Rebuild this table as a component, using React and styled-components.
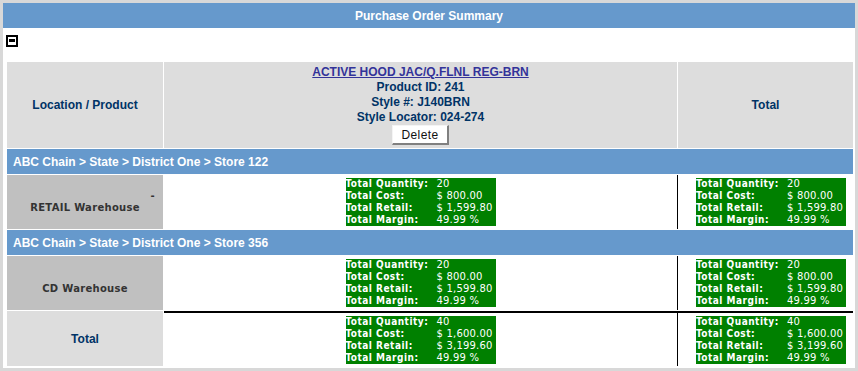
import React from 'react';
import styled, { createGlobalStyle } from 'styled-components';

const GlobalStyle = createGlobalStyle`
  html, body {
    margin: 0;
    padding: 0;
    background: #d8d8d8;
  }
  body {
    font-family: "Liberation Sans", Arial, sans-serif;
  }
`;

const locations = [
  {
    path: 'ABC Chain > State > District One > Store 122',
    name: 'RETAIL Warehouse',
    dash: true,
    stats: { qty: '20', cost: '$ 800.00', retail: '$ 1,599.80', margin: '49.99 %' },
  },
  {
    path: 'ABC Chain > State > District One > Store 356',
    name: 'CD Warehouse',
    dash: false,
    stats: { qty: '20', cost: '$ 800.00', retail: '$ 1,599.80', margin: '49.99 %' },
  },
];

const totals = { qty: '40', cost: '$ 1,600.00', retail: '$ 3,199.60', margin: '49.99 %' };

function MinusIcon() {
  return (
    <svg width="12" height="12" viewBox="0 0 12 12">
      <rect x="1" y="1" width="10" height="10" fill="#fff" stroke="#000" strokeWidth="2" />
      <rect x="3" y="4" width="6" height="3" fill="#000" />
    </svg>
  );
}

function StatsBox({ stats }) {
  return (
    <Stats>
      <dt>Total Quantity:</dt>
      <dd>{stats.qty}</dd>
      <dt>Total Cost:</dt>
      <dd>{stats.cost}</dd>
      <dt>Total Retail:</dt>
      <dd>{stats.retail}</dd>
      <dt>Total Margin:</dt>
      <dd>{stats.margin}</dd>
    </Stats>
  );
}

function DataRow({ name, label, dash, stats, sum, isTotal }) {
  return (
    <>
      {isTotal ? (
        <TotalLabel>{label}</TotalLabel>
      ) : (
        <LocationCell>
          <Dash>{dash ? '-' : '\u00a0'}</Dash>
          <span>{name}</span>
        </LocationCell>
      )}
      <DataSpan $ruled={isTotal}>
        <ProductPart>
          <StatsBox stats={stats} />
        </ProductPart>
        <Divider />
        <TotalPart>
          <StatsBox stats={sum} />
        </TotalPart>
      </DataSpan>
    </>
  );
}

export default function App() {
  return (
    <>
      <GlobalStyle />
      <Panel>
        <TitleBar>Purchase Order Summary</TitleBar>
        <ToggleRow>
          <MinusIcon />
        </ToggleRow>
        <Grid>
          <HeadCell>Location / Product</HeadCell>
          <ProductHead>
            <ProductLink href="#">ACTIVE HOOD JAC/Q.FLNL REG-BRN</ProductLink>
            <div>Product ID: 241</div>
            <div>Style #: J140BRN</div>
            <div>Style Locator: 024-274</div>
            <DeleteButton type="button">Delete</DeleteButton>
          </ProductHead>
          <HeadCell>Total</HeadCell>

          {locations.map((loc) => (
            <React.Fragment key={loc.path}>
              <SectionRow>{loc.path}</SectionRow>
              <DataRow name={loc.name} dash={loc.dash} stats={loc.stats} sum={loc.stats} />
            </React.Fragment>
          ))}

          <DataRow isTotal label="Total" stats={totals} sum={totals} />
        </Grid>
      </Panel>
    </>
  );
}

const Panel = styled.div`
  width: 852px;
  height: 365px;
  margin: 3px;
  background: #ffffff;
  display: flex;
  flex-direction: column;
`;

const TitleBar = styled.div`
  height: 25px;
  background: #6699cc;
  color: #ffffff;
  font-weight: bold;
  font-size: 12px;
  display: flex;
  align-items: center;
  justify-content: center;
`;

const ToggleRow = styled.div`
  height: 34px;
  box-sizing: border-box;
  padding: 7px 0 0 3px;
  svg {
    display: block;
  }
`;

const Grid = styled.div`
  margin: 0 2px 2px 4px;
  display: grid;
  grid-template-columns: 156px 513px 175px;
  grid-template-rows: 86px 25px 54px 25px 54px 55px;
  gap: 1px;
  background: #ffffff;
`;

const HeadCell = styled.div`
  background: #dddddd;
  color: #003366;
  font-weight: bold;
  font-size: 12px;
  display: flex;
  align-items: center;
  justify-content: center;
`;

const ProductHead = styled(HeadCell)`
  flex-direction: column;
  line-height: 15px;
`;

const ProductLink = styled.a`
  color: #333399;
  text-decoration: underline;
`;

const DeleteButton = styled.button`
  width: 57px;
  height: 20px;
  padding: 0;
  background: #ffffff;
  color: #111111;
  font-family: "Liberation Sans", Arial, sans-serif;
  font-size: 12px;
  letter-spacing: 0.4px;
  border-style: solid;
  border-width: 1px 2px 2px 1px;
  border-color: #f4f4f4 #808080 #808080 #f4f4f4;
  box-sizing: border-box;
`;

const SectionRow = styled.div`
  grid-column: 1 / 4;
  background: #6699cc;
  color: #ffffff;
  font-weight: bold;
  font-size: 12px;
  display: flex;
  align-items: center;
  padding-left: 6px;
`;

const LocationCell = styled.div`
  background: #c0c0c0;
  color: #333333;
  font-family: "DejaVu Sans", Verdana, sans-serif;
  font-weight: bold;
  font-size: 10px;
  line-height: 12px;
  letter-spacing: 0.3px;
  display: flex;
  flex-direction: column;
  justify-content: center;
  align-items: center;
`;

const Dash = styled.span`
  align-self: flex-end;
  padding-right: 8px;
`;

const TotalLabel = styled.div`
  background: #dddddd;
  color: #003366;
  font-weight: bold;
  font-size: 12px;
  display: flex;
  align-items: center;
  justify-content: center;
`;

const DataSpan = styled.div`
  grid-column: 2 / 4;
  display: flex;
  background: #ffffff;
  border-top: ${(p) => (p.$ruled ? '2px solid #000' : 'none')};
`;

const ProductPart = styled.div`
  width: 513px;
  display: flex;
  align-items: center;
  justify-content: center;
`;

const Divider = styled.div`
  width: 1px;
  background: #000000;
`;

const TotalPart = styled.div`
  flex: 1;
  display: flex;
  align-items: center;
  padding-left: 18px;
`;

const Stats = styled.dl`
  margin: 0;
  width: 150px;
  background: #008000;
  color: #ffffff;
  font-family: "DejaVu Sans", Verdana, sans-serif;
  font-size: 10px;
  line-height: 12px;
  display: grid;
  grid-template-columns: 91px 1fr;
  dt {
    font-family: "DejaVu Sans Condensed", "DejaVu Sans", sans-serif;
    font-stretch: condensed;
    font-weight: bold;
    letter-spacing: 0.5px;
  }
  dd {
    margin: 0;
    white-space: nowrap;
    letter-spacing: 0.2px;
  }
`;
